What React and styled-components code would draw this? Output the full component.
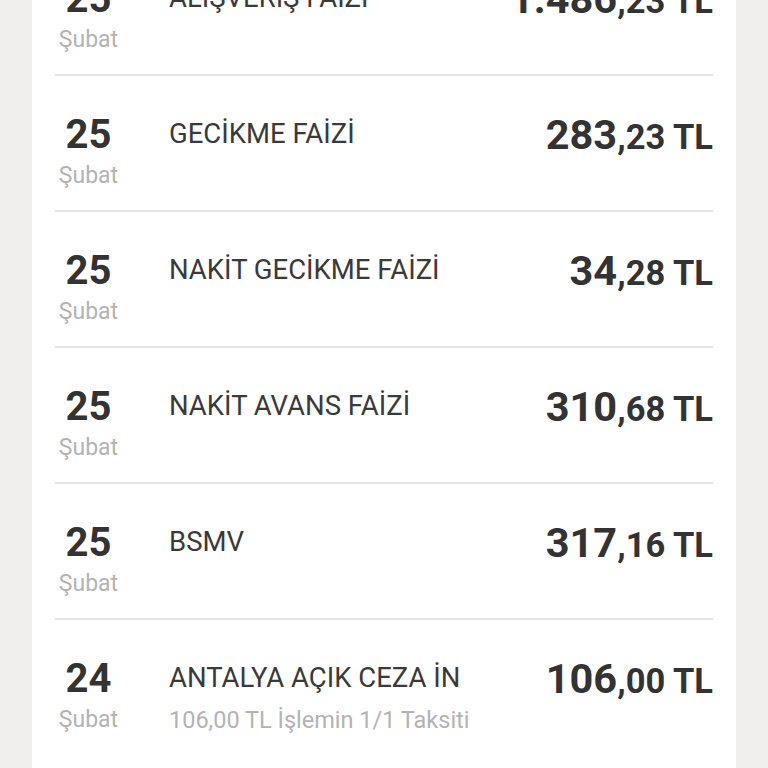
import React from "react"
import styled, { createGlobalStyle } from "styled-components"

const GlobalStyle = createGlobalStyle`
  html, body {
    margin: 0;
    padding: 0;
    background: #f0efee;
    font-family: Roboto, "Liberation Sans", sans-serif;
    overflow: hidden;
  }
`

const transactions = [
  { day: "25", month: "Şubat", title: "ALIŞVERİŞ FAİZİ", whole: "1.486", cents: "23" },
  { day: "25", month: "Şubat", title: "GECİKME FAİZİ", whole: "283", cents: "23" },
  { day: "25", month: "Şubat", title: "NAKİT GECİKME FAİZİ", whole: "34", cents: "28" },
  { day: "25", month: "Şubat", title: "NAKİT AVANS FAİZİ", whole: "310", cents: "68" },
  { day: "25", month: "Şubat", title: "BSMV", whole: "317", cents: "16" },
  {
    day: "24",
    month: "Şubat",
    title: "ANTALYA AÇIK CEZA İN",
    note: "106,00 TL İşlemin 1/1 Taksiti",
    whole: "106",
    cents: "00",
  },
]

export default function App() {
  return (
    <>
      <GlobalStyle />
      <Page>
        <Card>
          {transactions.map((t, i) => (
            <Row key={i}>
              <DateCol>
                <Day>{t.day}</Day>
                <Month>{t.month}</Month>
              </DateCol>
              <Info>
                <Title>{t.title}</Title>
                {t.note && <Note>{t.note}</Note>}
              </Info>
              <Amount>
                {t.whole}
                <Cents>,{t.cents} TL</Cents>
              </Amount>
            </Row>
          ))}
        </Card>
      </Page>
    </>
  )
}

const Page = styled.div`
  padding: 0 32px;
`

const Card = styled.div`
  background: #ffffff;
  margin-top: -60px;
  padding: 0 23px 40px;
`

const Row = styled.div`
  display: grid;
  grid-template-columns: 67px 1fr auto;
  column-gap: 47px;
  align-items: start;
  height: 136px;
  padding-top: 35px;
  box-sizing: border-box;
  border-bottom: 2px solid #e3e3e3;

  &:last-child {
    border-bottom: none;
  }
`

const DateCol = styled.div`
  display: flex;
  flex-direction: column;
  align-items: center;
`

const Day = styled.div`
  font-size: 40px;
  line-height: 48px;
  font-weight: 700;
  color: #333333;
`

const Month = styled.div`
  margin-top: 3px;
  font-size: 23px;
  line-height: 28px;
  color: #b3b3b3;
`

const Info = styled.div`
  display: flex;
  flex-direction: column;
  padding-top: 7px;
`

const Title = styled.div`
  font-size: 27.5px;
  line-height: 32px;
  color: #3a3a3a;
  white-space: nowrap;
`

const Note = styled.div`
  margin-top: 12px;
  font-size: 23.5px;
  line-height: 28px;
  color: #b3b3b3;
  white-space: nowrap;
`

const Amount = styled.div`
  font-size: 41.5px;
  line-height: 48px;
  font-weight: 700;
  color: #333333;
  white-space: nowrap;
  text-align: right;
`

const Cents = styled.span`
  font-size: 34.5px;
`
